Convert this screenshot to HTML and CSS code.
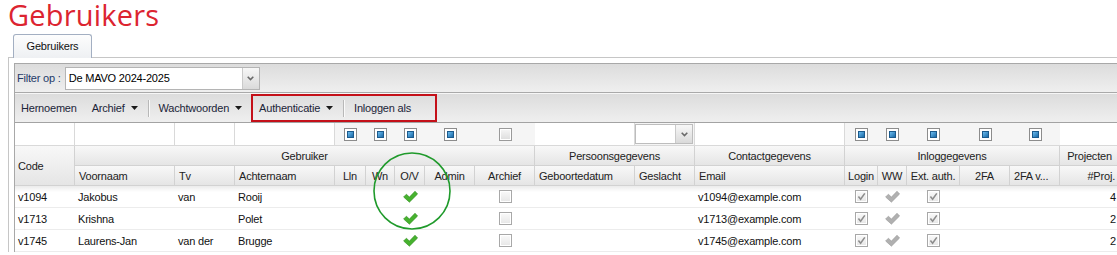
FILE: index.html
```html
<!DOCTYPE html>
<html>
<head>
<meta charset="utf-8">
<title>Gebruikers</title>
<link rel="stylesheet" href="styles.css">
</head>
<body>
<h1 class="title">Gebruikers</h1>
<div class="tabs"><div class="tab">Gebruikers</div></div>
<div class="panel">
  <div class="inner">
    <div class="tbar tbar1">
      <span class="flabel">Filter op :</span>
      <div class="combo">
        <span class="combo-text">De MAVO 2024-2025</span>
        <span class="trigger"><svg width="7" height="5" viewBox="0 0 7 5"><path d="M0.7 0.8 L3.5 3.6 L6.3 0.8" fill="none" stroke="#6a6a6a" stroke-width="1.6"/></svg></span>
      </div>
    </div>
    <div class="tbar tbar2">
      <span class="tbtn">Hernoemen</span>
      <span class="tbtn gap17">Archief<svg class="arr" width="7" height="4" viewBox="0 0 7 4"><path d="M0 0H7L3.5 4Z"/></svg></span>
      <span class="tsep"></span>
      <span class="tbtn">Wachtwoorden<svg class="arr" width="7" height="4" viewBox="0 0 7 4"><path d="M0 0H7L3.5 4Z"/></svg></span>
      <div class="hilite">
        <span class="tbtn">Authenticatie<svg class="arr" width="7" height="4" viewBox="0 0 7 4"><path d="M0 0H7L3.5 4Z"/></svg></span>
        <span class="tsep sep-in"></span>
        <span class="tbtn">Inloggen als</span>
      </div>
    </div>
    <div class="grid">
      <!-- filter row -->
      <div class="fi"></div>
      <div class="fi"></div>
      <div class="fi"></div>
      <div class="fi"></div>
      <div class="fc"><span class="cbb"><i></i></span></div>
      <div class="fc"><span class="cbb"><i></i></span></div>
      <div class="fc"><span class="cbb"><i></i></span></div>
      <div class="fc"><span class="cbb"><i></i></span></div>
      <div class="fc"><span class="cbg"></span></div>
      <div class="fi"></div>
      <div class="fi fcombo"><div class="mini-combo"><span class="mc-text"></span><span class="trigger"><svg width="7" height="5" viewBox="0 0 7 5"><path d="M0.7 0.8 L3.5 3.6 L6.3 0.8" fill="none" stroke="#6a6a6a" stroke-width="1.6"/></svg></span></div></div>
      <div class="fi"></div>
      <div class="fc"><span class="cbb"><i></i></span></div>
      <div class="fc"><span class="cbb"><i></i></span></div>
      <div class="fc"><span class="cbb"><i></i></span></div>
      <div class="fc"><span class="cbb"><i></i></span></div>
      <div class="fc"><span class="cbb"><i></i></span></div>
      <div class="fi"></div>

      <!-- group header row -->
      <div class="hd code-hd">Code</div>
      <div class="hd c span8">Gebruiker</div>
      <div class="hd c span2">Persoonsgegevens</div>
      <div class="hd c">Contactgegevens</div>
      <div class="hd c span5">Inloggegevens</div>
      <div class="hd c">Projecten</div>

      <!-- column header row -->
      <div class="hd">Voornaam</div>
      <div class="hd">Tv</div>
      <div class="hd">Achternaam</div>
      <div class="hd c">Lln</div>
      <div class="hd c">Wn</div>
      <div class="hd c">O/V</div>
      <div class="hd c">Admin</div>
      <div class="hd c">Archief</div>
      <div class="hd">Geboortedatum</div>
      <div class="hd">Geslacht</div>
      <div class="hd">Email</div>
      <div class="hd c">Login</div>
      <div class="hd c">WW</div>
      <div class="hd c">Ext. auth.</div>
      <div class="hd c">2FA</div>
      <div class="hd">2FA v...</div>
      <div class="hd r">#Proj.</div>

      <!-- row 1 -->
      <div class="td r1">v1094</div>
      <div class="td r1">Jakobus</div>
      <div class="td r1">van</div>
      <div class="td r1">Rooij</div>
      <div class="td r1"></div>
      <div class="td r1"></div>
      <div class="td r1 c"><svg class="tick" width="15" height="13" viewBox="0 0 15 13"><polygon class="tick-g" points="0.6,7 3.4,4.2 6.4,7.1 12,1.2 14.6,4 6.4,12.2"/></svg></div>
      <div class="td r1"></div>
      <div class="td r1 c"><span class="cbd"></span></div>
      <div class="td r1"></div>
      <div class="td r1"></div>
      <div class="td r1">v1094@example.com</div>
      <div class="td r1 c"><span class="cbd"><svg width="11" height="11" viewBox="0 0 11 11"><path d="M2.4 5.6 L4.6 8.2 L8.8 2.4" fill="none" stroke="#8d8d8d" stroke-width="1.6"/></svg></span></div>
      <div class="td r1 c"><svg class="tick" width="15" height="13" viewBox="0 0 15 13"><polygon class="tick-s" points="0.6,7 3.4,4.2 6.4,7.1 12,1.2 14.6,4 6.4,12.2"/></svg></div>
      <div class="td r1 c"><span class="cbd"><svg width="11" height="11" viewBox="0 0 11 11"><path d="M2.4 5.6 L4.6 8.2 L8.8 2.4" fill="none" stroke="#8d8d8d" stroke-width="1.6"/></svg></span></div>
      <div class="td r1"></div>
      <div class="td r1"></div>
      <div class="td r1 r">4</div>

      <!-- row 2 -->
      <div class="td">v1713</div>
      <div class="td">Krishna</div>
      <div class="td"></div>
      <div class="td">Polet</div>
      <div class="td"></div>
      <div class="td"></div>
      <div class="td c"><svg class="tick" width="15" height="13" viewBox="0 0 15 13"><polygon class="tick-g" points="0.6,7 3.4,4.2 6.4,7.1 12,1.2 14.6,4 6.4,12.2"/></svg></div>
      <div class="td"></div>
      <div class="td c"><span class="cbd"></span></div>
      <div class="td"></div>
      <div class="td"></div>
      <div class="td">v1713@example.com</div>
      <div class="td c"><span class="cbd"><svg width="11" height="11" viewBox="0 0 11 11"><path d="M2.4 5.6 L4.6 8.2 L8.8 2.4" fill="none" stroke="#8d8d8d" stroke-width="1.6"/></svg></span></div>
      <div class="td c"><svg class="tick" width="15" height="13" viewBox="0 0 15 13"><polygon class="tick-s" points="0.6,7 3.4,4.2 6.4,7.1 12,1.2 14.6,4 6.4,12.2"/></svg></div>
      <div class="td c"><span class="cbd"><svg width="11" height="11" viewBox="0 0 11 11"><path d="M2.4 5.6 L4.6 8.2 L8.8 2.4" fill="none" stroke="#8d8d8d" stroke-width="1.6"/></svg></span></div>
      <div class="td"></div>
      <div class="td"></div>
      <div class="td r">2</div>

      <!-- row 3 -->
      <div class="td">v1745</div>
      <div class="td">Laurens-Jan</div>
      <div class="td">van der</div>
      <div class="td">Brugge</div>
      <div class="td"></div>
      <div class="td"></div>
      <div class="td c"><svg class="tick" width="15" height="13" viewBox="0 0 15 13"><polygon class="tick-g" points="0.6,7 3.4,4.2 6.4,7.1 12,1.2 14.6,4 6.4,12.2"/></svg></div>
      <div class="td"></div>
      <div class="td c"><span class="cbd"></span></div>
      <div class="td"></div>
      <div class="td"></div>
      <div class="td">v1745@example.com</div>
      <div class="td c"><span class="cbd"><svg width="11" height="11" viewBox="0 0 11 11"><path d="M2.4 5.6 L4.6 8.2 L8.8 2.4" fill="none" stroke="#8d8d8d" stroke-width="1.6"/></svg></span></div>
      <div class="td c"><svg class="tick" width="15" height="13" viewBox="0 0 15 13"><polygon class="tick-s" points="0.6,7 3.4,4.2 6.4,7.1 12,1.2 14.6,4 6.4,12.2"/></svg></div>
      <div class="td c"><span class="cbd"><svg width="11" height="11" viewBox="0 0 11 11"><path d="M2.4 5.6 L4.6 8.2 L8.8 2.4" fill="none" stroke="#8d8d8d" stroke-width="1.6"/></svg></span></div>
      <div class="td"></div>
      <div class="td"></div>
      <div class="td r">2</div>

      <svg class="annot" width="80" height="80" viewBox="0 0 80 80"><circle cx="40" cy="40" r="38" fill="none" stroke="#1f9a2b" stroke-width="1.6"/></svg>
    </div>
  </div>
</div>
</body>
</html>
```
FILE: styles.css
```css
html, body {
  margin: 0;
  padding: 0;
  overflow: hidden;
  background: #fff;
}
body {
  padding-left: 8px;
  font-family: "Liberation Sans", Arial, sans-serif;
  font-size: 11px;
  letter-spacing: -0.2px;
  color: #1a1a1a;
}
.title {
  margin: 0;
  height: 28px;
  font-family: "Open Sans", sans-serif;
  font-weight: 500;
  font-size: 29px;
  line-height: 29px;
  letter-spacing: 0.2px;
  color: #dc2430;
}
.tabs {
  margin-top: 6px;
  height: 23px;
  padding-left: 5px;
  display: flex;
}
.tab {
  position: relative;
  z-index: 1;
  width: 79px;
  height: 24px;
  box-sizing: border-box;
  border: 1px solid #a3afc2;
  border-bottom: none;
  border-radius: 3px 3px 0 0;
  background: linear-gradient(#fdfdfd, #eef0f3);
  text-align: center;
  line-height: 22px;
  color: #111;
}
.panel {
  width: 1200px;
  border-top: 1px solid #c6c6c6;
  border-left: 1px solid #c6c6c6;
  padding: 5px 0 0 5px;
}
.inner {
  border-top: 1px solid #a8a8a8;
  border-left: 1px solid #a8a8a8;
}
.tbar {
  display: flex;
  align-items: center;
  height: 28px;
  background: linear-gradient(#dcdcdc, #efefef);
}
.tbar1 {
  padding-left: 2px;
  border-bottom: 1px solid #a9a9a9;
}
.tbar2 {
  padding-left: 6px;
  border-top: 1px solid #f6f6f6;
  border-bottom: 1px solid #a3a3a3;
  color: #1b2438;
}
.flabel {
  color: #1f3a68;
}
.combo {
  margin-left: 4px;
  width: 195px;
  height: 23px;
  box-sizing: border-box;
  border: 1px solid #b4b4b4;
  background: #fff;
  display: flex;
}
.combo-text {
  flex: 1;
  padding-left: 3px;
  line-height: 21px;
  color: #000;
}
.trigger {
  width: 16px;
  border-left: 1px solid #cacaca;
  background: linear-gradient(#f7f7f7, #dadada);
  display: flex;
  align-items: center;
  justify-content: center;
}
.tbtn {
  display: flex;
  align-items: center;
}
.gap17 {
  margin-left: 15px;
}
.arr {
  margin-left: 6px;
  fill: #1a1a1a;
}
.tsep {
  width: 1px;
  height: 17px;
  background: #b8b8b8;
  border-right: 1px solid #fafafa;
  margin: 0 9px 0 10px;
}
.sep-in {
  margin: 0 9px 0 10px;
}
.hilite {
  margin-left: 9px;
  height: 28px;
  box-sizing: border-box;
  border: 2px solid #c41019;
  display: flex;
  align-items: center;
  padding: 0 24px 0 6px;
}
.grid {
  position: relative;
  display: grid;
  grid-template-columns: 60px 100px 60px 100px 31px 29px 30px 50px 60px 100px 60px 150px 33px 29px 53px 50px 50px 60px;
  grid-template-rows: 23px 20px 20px 22px 22px 22px;
}
.grid > div {
  box-sizing: border-box;
  min-width: 0;
  overflow: hidden;
  white-space: nowrap;
}
.fi {
  background: #fff;
  border-right: 1px solid #d9d9d9;
  border-bottom: 1px solid #d9d9d9;
}
.fc {
  background: #f5f5f5;
  border-bottom: 1px solid #d9d9d9;
  display: flex;
  align-items: center;
  justify-content: center;
}
.fcombo {
  padding: 1px 1px 1px 0;
  background: #f5f5f5;
}
.mini-combo {
  height: 100%;
  box-sizing: border-box;
  border: 1px solid #bdbdbd;
  display: flex;
  background: #fff;
}
.mc-text {
  flex: 1;
}
.cbb {
  width: 13px;
  height: 13px;
  box-sizing: border-box;
  border: 1px solid #8c8c8c;
  background: #fff;
  padding: 2px;
  display: flex;
}
.cbb i {
  flex: 1;
  background: linear-gradient(135deg, #6cbcee, #1a6aa8);
  border: 1px solid #1c5a8c;
}
.cbg {
  width: 13px;
  height: 13px;
  box-sizing: border-box;
  border: 1px solid #9a9a9a;
  background: linear-gradient(#f6f6f6, #dcdcdc);
  box-shadow: inset 0 0 0 1px #fff;
}
.hd {
  background: linear-gradient(#f8f8f8, #e5e5e5);
  border-right: 1px solid #d2d2d2;
  border-bottom: 1px solid #d2d2d2;
  display: flex;
  align-items: center;
  padding: 0 4px;
  color: #222;
}
.hd.c {
  justify-content: center;
}
.hd.r {
  justify-content: flex-end;
}
.code-hd {
  grid-row: span 2;
  padding-left: 3px;
}
.span8 {
  grid-column: span 8;
}
.span5 {
  grid-column: span 5;
}
.span2 {
  grid-column: span 2;
}
.td {
  border-bottom: 1px solid #ececec;
  display: flex;
  align-items: center;
  padding: 0 3px;
  color: #111;
}
.td.c {
  justify-content: center;
}
.td.r {
  justify-content: flex-end;
  padding-right: 4px;
}
.r1 {
  background: linear-gradient(rgba(0, 0, 0, 0.08), rgba(0, 0, 0, 0) 6px);
}
.cbd {
  width: 13px;
  height: 13px;
  box-sizing: border-box;
  border: 1px solid #a8a8a8;
  background: linear-gradient(#fafafa, #e6e6e6);
  box-shadow: inset 0 0 0 1px #fff;
  display: flex;
  align-items: center;
  justify-content: center;
}
.tick-g {
  fill: #46b22e;
  stroke: #2f8a1f;
  stroke-width: 0.6;
}
.tick-s {
  fill: #b0b0b0;
  stroke: #989898;
  stroke-width: 0.6;
}
.annot {
  position: absolute;
  left: 357px;
  top: 28px;
  pointer-events: none;
}
```
